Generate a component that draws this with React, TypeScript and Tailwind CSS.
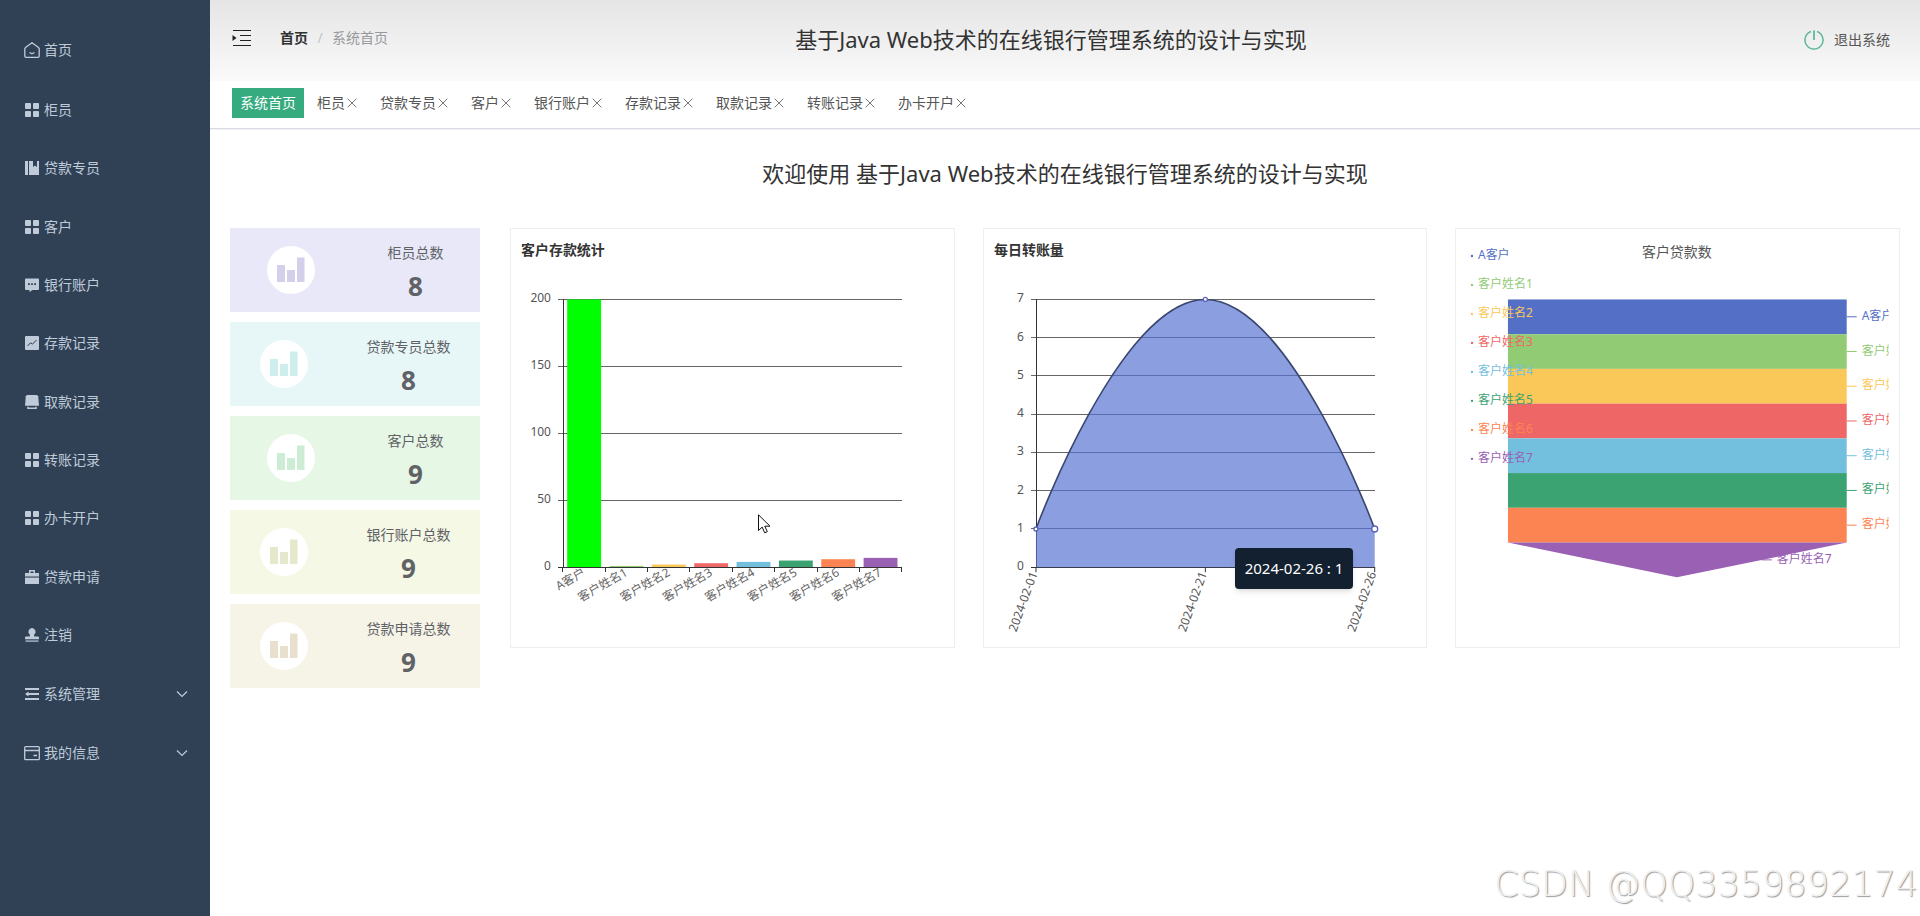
import type { ReactNode } from 'react'

const PALETTE = ['#5470c6', '#91cc75', '#fac858', '#ee6666', '#73c0de', '#3ba272', '#fc8452', '#9a60b4']
const CUSTOMERS = ['A客户', '客户姓名1', '客户姓名2', '客户姓名3', '客户姓名4', '客户姓名5', '客户姓名6', '客户姓名7']

const SYSTEM_NAME = '基于Java Web技术的在线银行管理系统的设计与实现'

const ICONS: Record<string, ReactNode> = {
  home: (
    <g fill="none" stroke="currentColor" strokeWidth="1.3" strokeLinejoin="round" strokeLinecap="round">
      <path d="M8 .8 14.2 5.2 15.2 6.6V14a1.3 1.3 0 0 1-1.3 1.3H2.1A1.3 1.3 0 0 1 .8 14V6.6l1-1.4z" />
      <path d="M6 10.8q2 1.5 4 0" />
    </g>
  ),
  grid: (
    <g fill="currentColor">
      <rect x="1" y="1" width="6" height="6" rx="1" />
      <rect x="9" y="1" width="6" height="6" rx="1" />
      <rect x="1" y="9" width="6" height="6" rx="1" />
      <rect x="9" y="9" width="6" height="6" rx="1" />
    </g>
  ),
  book: (
    <g fill="currentColor">
      <rect x="1" y="1" width="3" height="14" />
      <path d="M5 1h4v6l2-1.4 2 1.4V1h2v14H5z" />
    </g>
  ),
  chat: (
    <path
      fill="currentColor"
      fillRule="evenodd"
      d="M2 1.500h12a1 1 0 0 1 1 1V12a1 1 0 0 1-1 1H8.500L5.500 15v-2H2a1 1 0 0 1-1-1V2.500a1 1 0 0 1 1-1zM4 6.200v1.800h1.800V6.200zm3.100 0v1.800h1.800V6.200zm3.100 0v1.800H12V6.200z"
    />
  ),
  chart: (
    <>
      <rect x="1" y="1" width="14" height="14" rx="1" fill="currentColor" />
      <path d="M3.500 11 6.500 7.800 8.500 9.200 12.500 5" fill="none" stroke="#304156" strokeWidth="1" />
    </>
  ),
  platform: (
    <g fill="currentColor">
      <path d="M3 1h10l1.200 1.200.8 9.600H1l.8-9.600z" />
      <path d="M3.200 12.800h1.500v.8h6.600v-.8h1.500V15H3.200z" />
    </g>
  ),
  briefcase: (
    <g fill="currentColor">
      <path fillRule="evenodd" d="M5 1h6v3h4v3.500H1V4h4zm1.500 1.400V4h3V2.400z" />
      <path d="M1 8.600h14V15H1z" />
    </g>
  ),
  stamp: (
    <g fill="currentColor">
      <path d="M8 1a3.600 3.600 0 0 1 2.200 6.400V9.500H14a1 1 0 0 1 1 1v1.800H1v-1.800a1 1 0 0 1 1-1h3.800V7.400A3.600 3.600 0 0 1 8 1z" />
      <rect x="1.500" y="13.500" width="13" height="1.200" />
    </g>
  ),
  fold: (
    <g fill="currentColor">
      <rect x="1" y="2" width="14" height="2" />
      <path d="M1 8l3.500-2.400v1.400H15v2H4.500v1.400z" />
      <rect x="1" y="12" width="14" height="2" />
    </g>
  ),
  card: (
    <g fill="none" stroke="currentColor" strokeWidth="1.3">
      <rect x=".7" y="1.700" width="14.600" height="13" rx="1" />
      <path d="M.7 5.500h14.600M9.500 10.500h3.500" />
    </g>
  ),
}

const MENU = [
  { label: '柜员', icon: 'grid' },
  { label: '贷款专员', icon: 'book' },
  { label: '客户', icon: 'grid' },
  { label: '银行账户', icon: 'chat' },
  { label: '存款记录', icon: 'chart' },
  { label: '取款记录', icon: 'platform' },
  { label: '转账记录', icon: 'grid' },
  { label: '办卡开户', icon: 'grid' },
  { label: '贷款申请', icon: 'briefcase' },
  { label: '注销', icon: 'stamp' },
]

const SUBMENUS = [
  { label: '系统管理', icon: 'fold' },
  { label: '我的信息', icon: 'card' },
]

const TABS = ['柜员', '贷款专员', '客户', '银行账户', '存款记录', '取款记录', '转账记录', '办卡开户']

const STATS = [
  { label: '柜员总数', value: 8, bg: 'bg-[#e8e8f8]', bar: 'text-[#d4d0ec]' },
  { label: '贷款专员总数', value: 8, bg: 'bg-[#e7f7f8]', bar: 'text-[#cdeeec]' },
  { label: '客户总数', value: 9, bg: 'bg-[#e6f7e6]', bar: 'text-[#cdecd6]' },
  { label: '银行账户总数', value: 9, bg: 'bg-[#f5f8e5]', bar: 'text-[#e6e8cc]' },
  { label: '贷款申请总数', value: 9, bg: 'bg-[#f6f3e7]', bar: 'text-[#e8dfcc]' },
]

function MenuIcon({ name }: { name: string }) {
  return (
    <span className="flex w-6 justify-center">
      <svg viewBox="0 0 16 16" className="size-4" aria-hidden="true">
        {ICONS[name]}
      </svg>
    </span>
  )
}

function Sidebar() {
  return (
    <aside className="w-[210px] shrink-0 bg-[#304156] pt-5 text-sm text-[#bfcbd9]">
      <nav>
        <a href="#home" className="flex h-[60px] items-center pl-5">
          <MenuIcon name="home" />
          首页
        </a>
        <ul className="flex h-[584px] flex-col justify-between pt-px">
          {MENU.map((item) => (
            <li key={item.label}>
              <a href="#menu" className="flex h-[58px] items-center pl-5">
                <MenuIcon name={item.icon} />
                {item.label}
              </a>
            </li>
          ))}
        </ul>
        {SUBMENUS.map((item) => (
          <button key={item.label} type="button" className="flex h-[59px] w-full items-center pr-[22px] pl-5">
            <MenuIcon name={item.icon} />
            {item.label}
            <svg viewBox="0 0 12 8" className="ml-auto h-2 w-3" aria-hidden="true">
              <path d="M1 1.500 6 6.500 11 1.500" fill="none" stroke="currentColor" strokeWidth="1.200" />
            </svg>
          </button>
        ))}
      </nav>
    </aside>
  )
}

function Header() {
  return (
    <header className="grid h-[81px] grid-cols-[1fr_auto_1fr] items-center bg-linear-to-b from-[#e5e5e5] to-[#fafafa] pr-[30px] pb-0.5 pl-[22px]">
      <div className="flex items-center pb-1">
        <button type="button" aria-label="折叠菜单">
          <svg viewBox="0 0 20 18" className="h-[18px] w-5 text-[#222]" aria-hidden="true">
            <path d="M1 1.500h18M8 6.500h11M8 11.500h11M1 16.500h18" stroke="currentColor" strokeWidth="1.200" />
            <path d="M.5 6v6L4.500 9z" fill="currentColor" />
          </svg>
        </button>
        <nav className="ml-7 flex text-sm">
          <a href="#home" className="font-bold text-[#303133]">首页</a>
          <span className="w-6 text-center text-[#c0c4cc]">/</span>
          <span className="text-[#97999e]">系统首页</span>
        </nav>
      </div>
      <h1 className="pr-5 text-[22px] text-[#333]">{SYSTEM_NAME}</h1>
      <button type="button" className="flex items-center gap-2.5 justify-self-end text-sm text-[#555]">
        <svg viewBox="0 0 20 20" className="size-5 text-[#5cb898]" fill="none" stroke="currentColor" aria-hidden="true">
          <path d="M7 1.500a9 9 0 1 0 6 0" strokeWidth="1.500" />
          <path d="M10 .5v9.500" strokeWidth="1.800" />
        </svg>
        退出系统
      </button>
    </header>
  )
}

function TabBar() {
  return (
    <div className="flex h-12 items-center gap-[5px] border-b border-[#d8dce5] pb-1 pl-[22px] text-sm text-[#555] shadow-2xs">
      <a href="#home" className="bg-[#36ab80] px-2 leading-[30px] text-white">系统首页</a>
      {TABS.map((tab) => (
        <div key={tab} className="flex items-center px-2">
          <a href="#tab" className="leading-[30px]">{tab}</a>
          <button type="button" aria-label={`关闭${tab}`} className="flex size-3.5 items-center justify-center">
            <svg viewBox="0 0 10 10" className="size-2.5" aria-hidden="true">
              <path d="M.7.7l8.600 8.600M9.300.7.700 9.300" stroke="#777" strokeWidth="1" />
            </svg>
          </button>
        </div>
      ))}
    </div>
  )
}

function StatCard({ label, value, bg, bar }: (typeof STATS)[number]) {
  return (
    <div className={`flex h-[84px] items-center justify-around ${bg}`}>
      <svg viewBox="0 0 48 48" className={`size-12 ${bar}`} aria-hidden="true">
        <circle cx="24" cy="24" r="24" fill="#fff" />
        <path d="M10 19h8v17h-8zM20 24h8v12h-8zM30 11.500h7.500V36H30z" fill="currentColor" />
      </svg>
      <div className="pt-2 text-center text-[#606266]">
        <div className="text-sm leading-6">{label}</div>
        <div className="text-[26px] leading-[42px] font-bold">{value}</div>
      </div>
    </div>
  )
}

function Panel({ children }: { children: ReactNode }) {
  return <section className="relative h-[420px] min-w-0 flex-1 border border-[#eee]">{children}</section>
}

const LEFT = 52
const RIGHT = 391
const TOP = 70.5
const BOTTOM = 338.5

function ValueAxis({ ticks }: { ticks: number[] }) {
  const max = ticks[ticks.length - 1]
  return (
    <g>
      {ticks.map((tick) => {
        const y = BOTTOM - ((BOTTOM - TOP) * tick) / max
        return (
          <g key={tick}>
            <line x1={LEFT - 5} x2={RIGHT} y1={y} y2={y} stroke={tick === 0 ? '#333' : '#666'} shapeRendering="crispEdges" />
            <text x={LEFT - 12} y={y + 3} textAnchor="end" fontSize="12" fill="#555">{tick}</text>
          </g>
        )
      })}
      <line x1={LEFT + 0.5} x2={LEFT + 0.5} y1={TOP} y2={BOTTOM} stroke="#333" shapeRendering="crispEdges" />
    </g>
  )
}

function DepositChart() {
  const values = [200, 1, 2, 3, 4, 5, 6, 7]
  const slot = (RIGHT - LEFT) / values.length
  return (
    <Panel>
      <svg viewBox="0 0 443 418" className="w-full" role="img" aria-label="客户存款统计">
        <text x="10" y="26" fontSize="14" fontWeight="bold" fill="#333">客户存款统计</text>
        <ValueAxis ticks={[0, 50, 100, 150, 200]} />
        {values.map((value, i) => {
          const height = ((BOTTOM - TOP) * value) / 200
          const x = LEFT + slot * i
          return (
            <g key={CUSTOMERS[i]}>
              <rect
                x={x + slot * 0.1}
                y={BOTTOM - height}
                width={slot * 0.8}
                height={height}
                fill={i === 0 ? '#00ff00' : PALETTE[i]}
              />
              <text
                transform={`translate(${x + slot / 2} ${BOTTOM + 4}) rotate(-30)`}
                y="4"
                textAnchor="end"
                fontSize="12"
                fill="#666"
              >
                {CUSTOMERS[i]}
              </text>
            </g>
          )
        })}
        {[...values, 0].map((_, i) => (
          <line
            key={i}
            x1={LEFT + slot * i}
            x2={LEFT + slot * i}
            y1={BOTTOM}
            y2={BOTTOM + 5}
            stroke="#333"
            shapeRendering="crispEdges"
          />
        ))}
        <line x1={LEFT} x2={RIGHT} y1={BOTTOM} y2={BOTTOM} stroke="#333" shapeRendering="crispEdges" />
      </svg>
      <svg viewBox="0 0 13 20" className="absolute top-[285px] left-[247px] h-5 w-[13px]" aria-hidden="true">
        <path d="M.5.800v15.700l3.700-3.400 2.500 5.700 2.600-1.100-2.500-5.500h5.200z" fill="#fff" stroke="#111" strokeWidth="1" />
      </svg>
    </Panel>
  )
}

function TransferChart() {
  const days = ['2024-02-01', '2024-02-21', '2024-02-26']
  const middle = (LEFT + RIGHT) / 2
  const half = (RIGHT - LEFT) / 2
  const low = BOTTOM - (BOTTOM - TOP) / 7
  const curve = `M${LEFT} ${low}C${LEFT} ${low} ${middle - half / 2} ${TOP} ${middle} ${TOP}C${middle + half / 2} ${TOP} ${RIGHT} ${low} ${RIGHT} ${low}`
  return (
    <Panel>
      <svg viewBox="0 0 443 418" className="w-full" role="img" aria-label="每日转账量">
        <text x="10" y="26" fontSize="14" fontWeight="bold" fill="#333">每日转账量</text>
        <ValueAxis ticks={[0, 1, 2, 3, 4, 5, 6, 7]} />
        <path d={`${curve}V${BOTTOM}H${LEFT}Z`} fill="#5470d0" fillOpacity="0.68" />
        <path d={curve} fill="none" stroke="#3a4770" strokeWidth="1.600" />
        {days.map((day, i) => {
          const x = LEFT + half * i
          return (
            <g key={day}>
              <line x1={x} x2={x} y1={BOTTOM} y2={BOTTOM + 5} stroke="#333" />
              <circle cx={x} cy={i === 1 ? TOP : low} r={i === 2 ? 3 : 2} fill="#fff" stroke="#5b62b8" strokeWidth="1.300" />
              <text
                transform={`translate(${x - 2} ${BOTTOM + 5}) rotate(-70)`}
                y="4"
                textAnchor="end"
                fontSize="12"
                fill="#555"
              >
                {day}
              </text>
            </g>
          )
        })}
      </svg>
      <div className="absolute top-[319px] left-[251px] rounded bg-[#122030] px-2.5 text-[15px] leading-[41px] whitespace-nowrap text-white shadow-md">
        2024-02-26 : 1
      </div>
    </Panel>
  )
}

function LoanChart() {
  const step = 34.75
  const center = 221
  const tip = TOP + step * 8
  return (
    <Panel>
      <svg viewBox="0 0 443 418" className="w-full" role="img" aria-label="客户贷款数">
        <defs>
          <clipPath id="loan-plot">
            <rect width="433" height="418" />
          </clipPath>
        </defs>
        <text x={center} y="28" textAnchor="middle" fontSize="14" fill="#555">客户贷款数</text>
        <g clipPath="url(#loan-plot)" fontSize="12">
          {CUSTOMERS.map((name, i) => {
            const y = TOP + step * i
            const mid = y + step / 2
            const last = i === CUSTOMERS.length - 1
            const edge = last ? 306 : RIGHT
            return (
              <g key={name} fill={PALETTE[i]}>
                {last ? (
                  <path d={`M${LEFT} ${y}H${RIGHT}L${center} ${tip}Z`} />
                ) : (
                  <rect x={LEFT} y={y} width={RIGHT - LEFT} height={step} />
                )}
                <line x1={edge} x2={edge + 10} y1={mid} y2={mid} stroke={PALETTE[i]} />
                <text x={edge + 15} y={mid + 3}>{name}</text>
              </g>
            )
          })}
          {CUSTOMERS.map((name, i) => (
            <g key={name} fill={PALETTE[i]}>
              <circle cx="16" cy={27 + 29 * i} r="1.200" />
              <text x="22" y={30 + 29 * i}>{name}</text>
            </g>
          ))}
        </g>
      </svg>
    </Panel>
  )
}

export default function App() {
  return (
    <div className="relative flex min-h-screen bg-white font-['Noto_Sans','Noto_Sans_CJK_SC',sans-serif]">
      <Sidebar />
      <div className="min-w-0 flex-1">
        <Header />
        <TabBar />
        <main className="px-5 pt-7">
          <h2 className="text-center text-[22px] leading-8 text-[#333]">欢迎使用 {SYSTEM_NAME}</h2>
          <div className="mt-[39px] flex items-start gap-[30px]">
            <div className="flex w-[250px] shrink-0 flex-col gap-2.5">
              {STATS.map((stat) => (
                <StatCard key={stat.label} {...stat} />
              ))}
            </div>
            <div className="flex min-w-0 flex-1 gap-7">
              <DepositChart />
              <TransferChart />
              <LoanChart />
            </div>
          </div>
        </main>
      </div>
      <div className="absolute right-0.5 bottom-[11px] font-['DejaVu_Sans'] text-[35px] leading-[42px] font-extralight text-[#f0f0f0] [text-shadow:1px_1px_1px_#999]">
        CSDN @QQ3359892174
      </div>
    </div>
  )
}
